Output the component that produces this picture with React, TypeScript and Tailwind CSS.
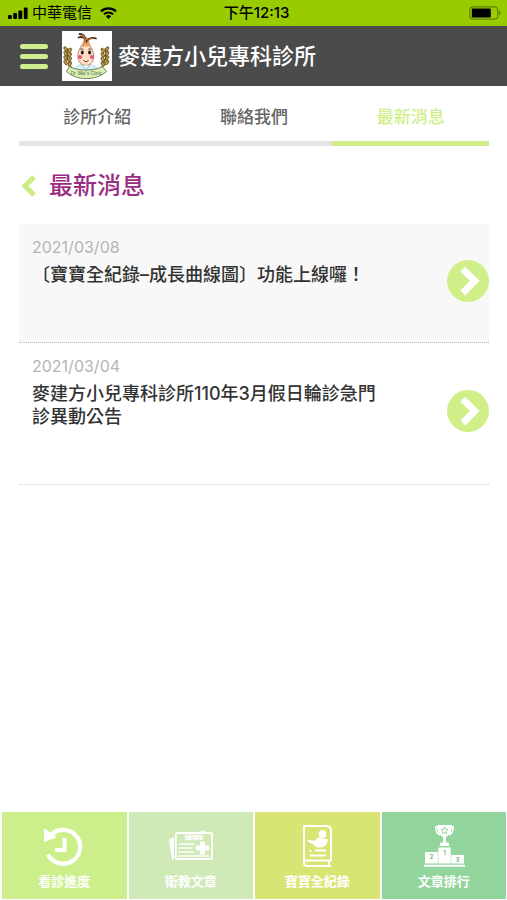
import type { ReactNode } from 'react';

const tabs = [
  { href: '#intro', label: '診所介紹', active: false },
  { href: '#contact', label: '聯絡我們', active: false },
  { href: '#news', label: '最新消息', active: true },
];

const news = [
  { id: 1, date: '2021/03/08', title: '〔寶寶全紀錄–成長曲線圖〕功能上線囉！', className: 'bg-[#f8f8f8] border-[#b8b8b8]' },
  { id: 2, date: '2021/03/04', title: '麥建方小兒專科診所110年3月假日輪診急門診異動公告', className: 'bg-white border-[#cfcfcf]' },
];

function StatusBar() {
  return (
    <div className="grid h-[26px] grid-cols-3 items-center bg-[#99cc00] pr-1.5 pl-2 text-black">
      <div className="flex items-center">
        <svg className="h-3 w-5" viewBox="0 0 20 12" fill="currentColor" aria-hidden="true">
          <rect x="0" y="8" width="3.8" height="4" rx="1" />
          <rect x="5.2" y="6" width="3.8" height="6" rx="1" />
          <rect x="10.4" y="3.5" width="3.8" height="8.5" rx="1" />
          <rect x="15.8" y="0.5" width="3.8" height="11.5" rx="1" />
        </svg>
        <span className="ml-1 text-[15px] leading-5 whitespace-nowrap">中華電信</span>
        <svg className="ml-2 h-3 w-[17px]" viewBox="0 0 17 12" fill="none" stroke="currentColor" aria-hidden="true">
          <path d="M1 4.4a11 11 0 0 1 15 0" strokeWidth="2.3" />
          <path d="M3.9 7.3a6.7 6.7 0 0 1 9.2 0" strokeWidth="2.1" />
          <path d="M8.5 12 5.8 9.2a4 4 0 0 1 5.4 0z" fill="currentColor" stroke="none" />
        </svg>
      </div>
      <span className="pl-1 text-center text-[15px] leading-5 font-medium whitespace-nowrap">下午12:13</span>
      <svg className="h-[14px] w-8 justify-self-end" viewBox="0 0 32 14" fill="none" aria-hidden="true">
        <rect x="0.8" y="0.8" width="28" height="12.4" rx="3.4" stroke="#5f8500" strokeWidth="1.2" />
        <rect x="2.8" y="2.6" width="19" height="8.8" rx="1" fill="#000" />
        <path d="M30 4.6c2 .6 2 4.2 0 4.8z" fill="#5f8500" />
      </svg>
    </div>
  );
}

function ClinicLogo() {
  return (
    <svg className="h-[50px] w-[50px]" viewBox="0 0 50 50" role="img" aria-label="logo">
      <rect width="50" height="50" fill="#fff" />
      {/* Wheat */}
      <path d="M11 38C6 32 4 26 6 17M38 38c5-6 7-12 5-21" fill="none" stroke="#554a20" strokeWidth="1" />
      <g stroke="#4a3c18" strokeWidth="0.7" fill="#c99a3b">
        {[18, 22.5, 27, 31.5].map((y) => (
          <g key={y}>
            <ellipse cx="3.6" cy={y} rx="1.4" ry="2.5" transform={`rotate(-30 3.6 ${y})`} />
            <ellipse cx="7.8" cy={y + 1.4} rx="1.4" ry="2.5" transform={`rotate(30 7.8 ${y + 1.4})`} />
            <ellipse cx="45" cy={y} rx="1.4" ry="2.5" transform={`rotate(30 45 ${y})`} />
            <ellipse cx="40.8" cy={y + 1.4} rx="1.4" ry="2.5" transform={`rotate(-30 40.8 ${y + 1.4})`} />
          </g>
        ))}
      </g>
      {/* Body */}
      <path d="M12 40c1-5 4-7 11.5-7s11 2 12.5 7z" fill="#d3f1f8" stroke="#9cc" strokeWidth="0.5" />
      {/* Onion head */}
      <path
        d="M22.5 7c0 6-5.500 9-6.500 16-.9 6 2 11.500 7.800 11.500S32.500 29 31.500 23c-1-7-5.500-9-5.500-16z"
        fill="#fde0c6"
        stroke="#9b6238"
        strokeWidth="0.7"
      />
      <path d="M22.500 7c0 4-2 6.500-4 9.500 4-1.800 7.500-1.800 11 0-2-3-3.500-5.500-3.500-9.500z" fill="#e8a365" />
      {/* Sprout */}
      <g fill="none" strokeLinecap="round">
        <path d="M23.500 11c.5-5-2-8-6-8M24.500 11c-1-4-4-6-8-4.500M25.500 10c1-3 5-4 8.500-2.500" stroke="#4a2d18" strokeWidth="1.8" />
        <path d="M23.500 12c.3-4-1.500-6.500-3.500-7.800M25.500 11c1-2.500 3-3.300 5-3.200" stroke="#dd8f4b" strokeWidth="1.1" />
      </g>
      <path d="M18 18.500q2-1.500 3.500 0M26 18.500q2-1.500 3.500 0" fill="none" stroke="#222" strokeWidth="0.7" />
      <ellipse cx="20.3" cy="21.5" rx="1.4" ry="2" fill="#111" />
      <ellipse cx="27.6" cy="21.5" rx="1.4" ry="2" fill="#111" />
      <circle cx="18" cy="26" r="2" fill="#f3526e" />
      <circle cx="30" cy="26" r="2" fill="#f3526e" />
      <path d="M21.5 29.5q2.5 2.5 5 0" fill="none" stroke="#8b2b20" strokeWidth="1" />
      <path d="m20.500 34.500 3.500 4 3.500-4" fill="#fff" stroke="#6cb5cc" strokeWidth="0.8" />
      {/* Ribbon */}
      <path d="M7.500 35.500c9 4.800 24 4.800 33 0l4 5c-11 9.500-30 9.500-40 0z" fill="#dcefb2" stroke="#44502c" strokeWidth="0.7" />
      <text x="24.5" y="44" textAnchor="middle" fontSize="4.5" fill="#45603a">Dr. Mai's Clinic</text>
    </svg>
  );
}

function ArrowBadge() {
  return (
    <svg className="mb-[5px] h-[42px] w-[42px] shrink-0" viewBox="0 0 42 42" fill="none" aria-hidden="true">
      <circle cx="21" cy="21" r="21" fill="#d0ef88" />
      <path d="M15.8 9.2 27.8 21 15.8 33" stroke="#fff" strokeWidth="6.8" />
    </svg>
  );
}

function HistoryIcon() {
  return (
    <svg className="h-11 w-11" viewBox="0 0 44 44" fill="none" stroke="#fff" aria-hidden="true">
      <path d="M8 12A17 17 0 1 1 6 30.5" strokeWidth="4.2" />
      <path d="M2.5 5v12.500L14 13z" fill="#fff" strokeWidth="1" />
      <path d="M22.5 14v12H13" strokeWidth="4" />
    </svg>
  );
}

function NewsIcon() {
  return (
    <svg className="h-11 w-11" viewBox="0 0 44 44" fill="none" stroke="#fff" aria-hidden="true">
      <path d="m0 15.500 5-2.500v22l-2 .5zM27 8.500l8.500-2L37.500 9H27z" fill="#fff" stroke="none" />
      <rect x="6.8" y="9" width="36.2" height="26" rx="1.5" strokeWidth="1.8" />
      <text x="24.8" y="16" textAnchor="middle" fontSize="6" fontWeight="700" fill="#fff" strokeWidth="0.4">NEWS</text>
      <path d="M9.500 20H25M9.500 24H24M9.500 28H25M9.500 32H40" strokeWidth="1.4" />
      <path d="M33.500 17.500v13M27 24h13" strokeWidth="4.8" />
    </svg>
  );
}

function BookIcon() {
  return (
    <svg className="h-11 w-11" viewBox="0 0 44 44" fill="none" stroke="#fff" aria-hidden="true">
      <path d="M9 39V2h22.500q4.500 0 4.500 5v30" strokeWidth="2" />
      <path d="M36 36.500H12q-3 0-3 2.700t3 2.800h24M34 36.500V42" strokeWidth="1.9" />
      <circle cx="27.5" cy="10" r="3.9" fill="#fff" stroke="none" />
      <path d="M12.500 16.500c2-.8 5-.2 7.500.5 1-2.500 2.500-4 5-3.500 3 .6 5.500 2 8 1.500-.2 5-3.500 8.500-8.500 8.500-3 0-5.500-1.500-7-4-2 0-4-1-5-3z" fill="#fff" stroke="none" />
      <path d="M14.500 27h2M20 26.500h11M15 31.500h16" strokeWidth="1.9" />
    </svg>
  );
}

function PodiumIcon() {
  return (
    <svg className="h-11 w-11" viewBox="0 0 44 44" fill="none" stroke="#fff" aria-hidden="true">
      <path d="M15 1h15c0 5-1 9-6 12v5.500h2.500l1 3.500h-10l1-3.500H21V13c-5-3-6-7-6-12z" fill="#fff" stroke="none" />
      <path d="M15.500 3h-1.800c0 4 1.800 7 4.500 8M29.500 3h1.800c0 4-1.800 7-4.500 8" strokeWidth="1.5" />
      <path d="m22.500 3 1 2.200 2.400.3-1.700 1.700.4 2.300-2.100-1.100-2.100 1.100.4-2.300-1.700-1.700 2.400-.3z" stroke="#91d59d" strokeWidth="1" />
      <path d="M3 28h12.800v11.500H3zM16.300 23.500h12.400v16H16.300zM29.200 31H42v8.500H29.200z" fill="#fff" stroke="none" />
      <path d="M2 41.800h41" strokeWidth="2" />
      <g fill="#7dbd8b" stroke="none" fontSize="6" fontWeight="700" textAnchor="middle">
        <text x="9.5" y="35">2</text>
        <text x="22.5" y="31">1</text>
        <text x="35.5" y="37.5">3</text>
      </g>
    </svg>
  );
}

const shortcuts: { href: string; label: string; icon: ReactNode; className: string }[] = [
  { href: '#progress', label: '看診進度', icon: <HistoryIcon />, className: 'bg-[#cdef8b]' },
  { href: '#articles', label: '衛教文章', icon: <NewsIcon />, className: 'bg-[#cfe9b7]' },
  { href: '#baby', label: '寶寶全紀錄', icon: <BookIcon />, className: 'bg-[#d8e574]' },
  { href: '#ranking', label: '文章排行', icon: <PodiumIcon />, className: 'bg-[#91d59d]' },
];

export default function App() {
  return (
    <div className="flex min-h-screen flex-col bg-white font-[Inter,'Noto_Sans_CJK_TC',sans-serif]">
      <StatusBar />

      <header className="flex h-[60px] items-center bg-[#4b4b4b] pl-5">
        <button type="button" aria-label="選單" className="flex w-7 flex-col gap-[5px]">
          <span className="h-[5px] rounded-full bg-[#d0ef91]" />
          <span className="h-[5px] rounded-full bg-[#d0ef91]" />
          <span className="h-[5px] rounded-full bg-[#d0ef91]" />
        </button>
        <a href="#home" className="ml-3.5 flex items-center gap-[6px]">
          <ClinicLogo />
          <span className="text-[22px] leading-8 font-medium text-white">麥建方小兒專科診所</span>
        </a>
      </header>

      <main className="pr-[18px] pl-[19px]">
        <nav className="grid grid-cols-3">
          {tabs.map((tab) => (
            <a
              key={tab.href}
              href={tab.href}
              className={`border-b-[5px] pt-[19px] pb-3 text-center text-[17px] leading-6 font-medium ${
                tab.active ? 'border-[#d0ef88] text-[#d0ef88]' : 'border-[#e5e5e5] text-[#666666]'
              }`}
            >
              {tab.label}
            </a>
          ))}
        </nav>

        <div className="flex items-center gap-3 pt-6 pb-[22px]">
          <button type="button" aria-label="返回" className="ml-[2px]">
            <svg className="h-[22px] w-4" viewBox="0 0 16 22" fill="none" stroke="#c9ec85" strokeWidth="5">
              <path d="M13 2 4 11l9 9" />
            </svg>
          </button>
          <h1 className="text-2xl leading-8 font-medium text-[#9b2c83]">最新消息</h1>
        </div>

        <ul>
          {news.map((item) => (
            <li key={item.id}>
              <a href={`#news-${item.id}`} className={`flex items-center justify-between border-b border-dotted pl-[13px] ${item.className}`}>
                <div className="max-w-[360px] pt-[11px] pb-14">
                  <time className="block text-base leading-6 text-[#b5b5b5]">{item.date}</time>
                  <h2 className="mt-1 text-lg leading-[23px] font-medium text-[#333333]">{item.title}</h2>
                </div>
                <ArrowBadge />
              </a>
            </li>
          ))}
        </ul>
      </main>

      <footer className="mt-auto grid grid-cols-4 gap-[2px] pr-px pb-px pl-[2px]">
        {shortcuts.map((item) => (
          <a key={item.href} href={item.href} className={`flex h-[87px] flex-col items-center pt-3 ${item.className}`}>
            {item.icon}
            <span className="mt-[3px] text-[13px] leading-5 font-bold text-white">{item.label}</span>
          </a>
        ))}
      </footer>
    </div>
  );
}
